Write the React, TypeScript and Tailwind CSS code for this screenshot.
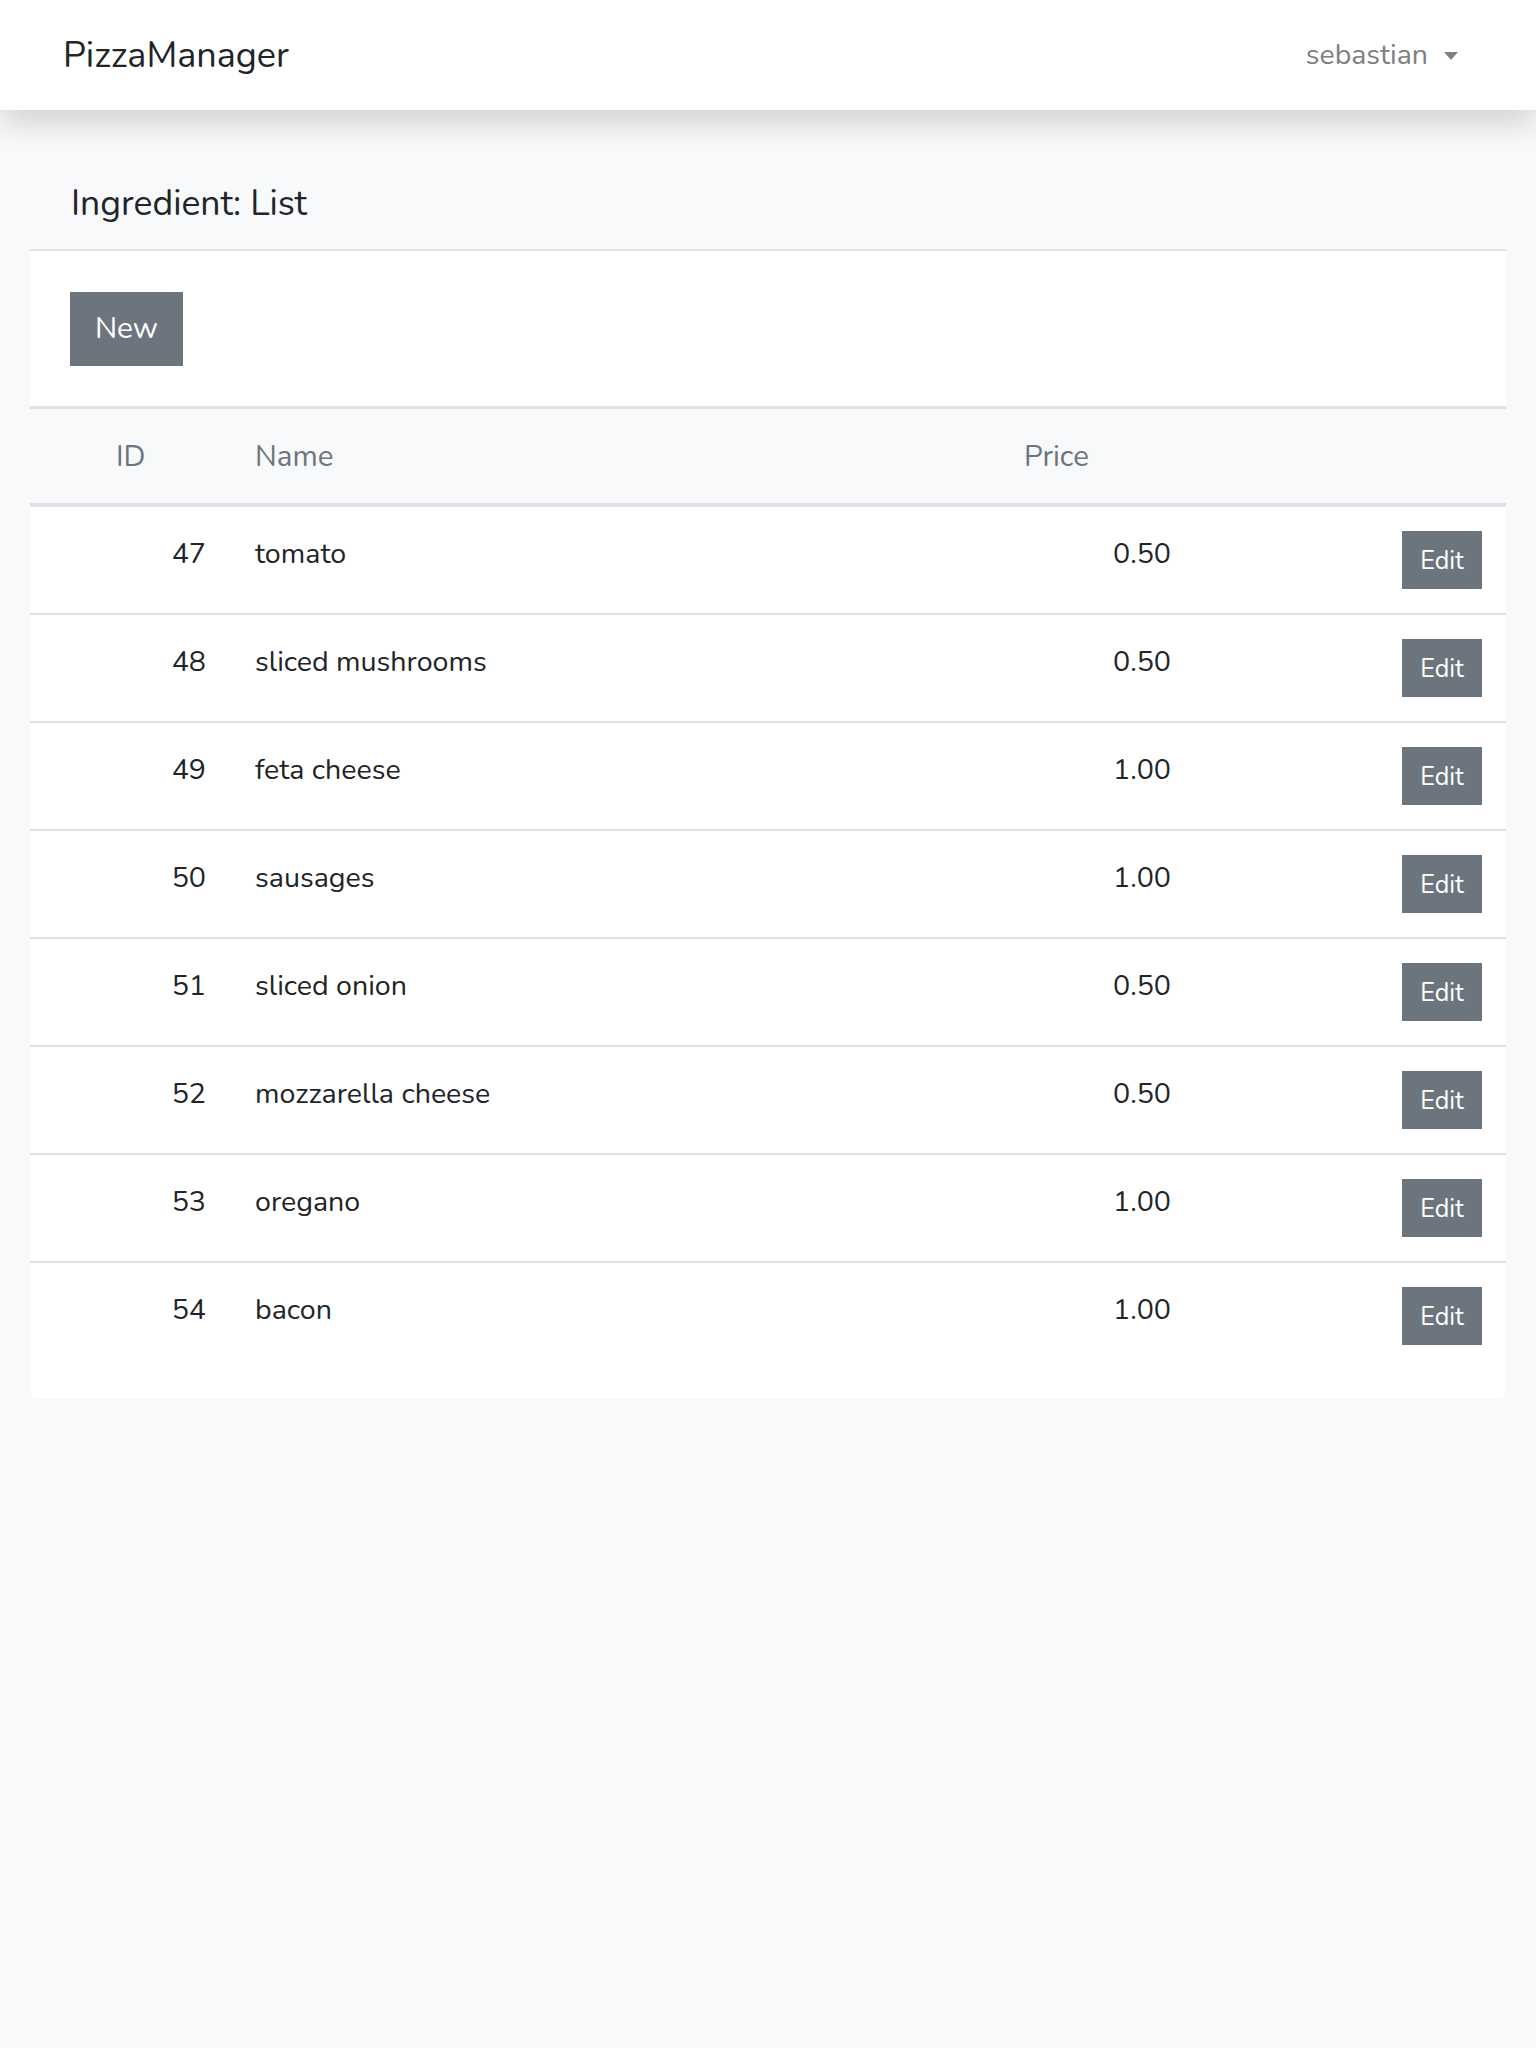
import React from "react"

interface Ingredient {
  id: number
  name: string
  price: string
}

const ingredients: Ingredient[] = [
  { id: 47, name: "tomato", price: "0.50" },
  { id: 48, name: "sliced mushrooms", price: "0.50" },
  { id: 49, name: "feta cheese", price: "1.00" },
  { id: 50, name: "sausages", price: "1.00" },
  { id: 51, name: "sliced onion", price: "0.50" },
  { id: 52, name: "mozzarella cheese", price: "0.50" },
  { id: 53, name: "oregano", price: "1.00" },
  { id: 54, name: "bacon", price: "1.00" },
]

const font = { fontFamily: "Nunito, Lato, 'Open Sans', sans-serif" }

export default function App() {
  return (
    <div className="min-h-[2048px] bg-[#f8f9fa] text-[#212529]" style={font}>
      {/* Navbar */}
      <nav className="relative z-10 h-[110px] bg-white shadow-[0_14px_28px_rgba(0,0,0,0.15)] flex items-center justify-between pl-[63px] pr-[78px]">
        <span className="text-[36px] leading-[44px] pt-[2px] text-[#212529]">PizzaManager</span>
        <button className="flex items-center gap-[16px] text-[28.5px] leading-[42px] text-[#808080]">
          sebastian
          <span className="w-0 h-0 border-t-[8px] border-t-[#808080] border-x-[7px] border-x-transparent mt-[2px]"></span>
        </button>
      </nav>

      <main className="px-[30px] pt-[55px]">
        <div className="bg-white rounded-[8px] overflow-hidden">
          {/* Card header */}
          <div className="h-[86px] bg-[#f8f9fa] border-b-2 border-[#e2e3e5] pl-[41px] pt-[18px]">
            <h5 className="text-[35.5px] leading-[42px]">Ingredient: List</h5>
          </div>

          {/* Card body */}
          <div className="h-[155px] flex items-center pl-[40px]">
            <button className="w-[113px] h-[74px] bg-[#6c757d] text-white text-[30px] leading-[42px]">New</button>
          </div>

          {/* Table */}
          <div className="grid grid-cols-[225px_769px_147px_1fr] border-t-[3px] border-b-4 border-[#dee2e6] bg-[#f8f9fa] h-[101px] text-[#6c757d] text-[29.5px] leading-[42px]">
            <div className="pl-[86px] pt-[26px]">ID</div>
            <div className="pt-[26px]">Name</div>
            <div className="pt-[26px]">Price</div>
            <div></div>
          </div>

          <div className="pb-[30px]">
            {ingredients.map((item, i) => (
              <div
                key={item.id}
                className={
                  i < ingredients.length - 1
                    ? "grid grid-cols-[225px_769px_147px_1fr] h-[108px] border-b-2 border-[#dee2e6] text-[28.6px] leading-[42px]"
                    : "grid grid-cols-[225px_769px_147px_1fr] h-[106px] text-[28.6px] leading-[42px]"
                }
              >
                <div className="pt-[26px] pr-[49px] text-right">{item.id}</div>
                <div className="pt-[26px]">{item.name}</div>
                <div className="pt-[26px] text-right">{item.price}</div>
                <div className="flex justify-end items-start pt-[24px] pr-[24px]">
                  <button className="w-[80px] h-[58px] bg-[#6c757d] text-white text-[25px] leading-[36px] pt-[2px]">Edit</button>
                </div>
              </div>
            ))}
          </div>
        </div>
      </main>
    </div>
  )
}
